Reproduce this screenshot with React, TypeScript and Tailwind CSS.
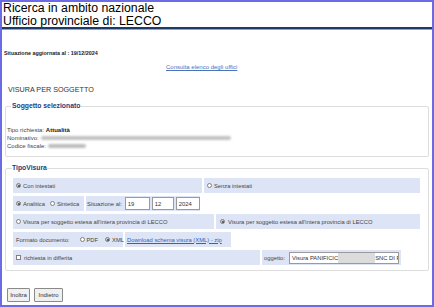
import React from "react";

const Radio = ({ checked }: { checked?: boolean }) => (
  <span
    className={
      "inline-flex w-[5px] h-[5px] rounded-full border border-[#808080] items-center justify-center shrink-0 " +
      (checked ? "bg-[#d0d0d0]" : "bg-white")
    }
  >
    {checked ? <span className="w-[2px] h-[2px] rounded-full bg-[#444]" /> : null}
  </span>
);

const Cell = ({ className, children }: { className?: string; children?: React.ReactNode }) => (
  <div className={"h-full bg-[#dde4f6] flex items-center gap-[2px] whitespace-nowrap shrink-0 " + (className ?? "")}>{children}</div>
);

const Box = ({ w, children }: { w: string; children?: React.ReactNode }) => (
  <div className={"h-[13px] border border-[#9a9a9a] bg-white flex items-center pl-[2px] text-[#333] " + w}>{children}</div>
);

export default function App() {
  return (
    <div className="w-[434px] h-[307px] border-2 border-[#6b6be6] bg-white overflow-hidden font-['Liberation_Sans',Arial,sans-serif] text-[#454545] flex flex-col">
      <div className="h-[25px] pl-[1px] text-[12.3px] leading-[12.5px] text-black">
        <div>Ricerca in ambito nazionale</div>
        <div>Ufficio provinciale di: LECCO</div>
      </div>
      <div className="h-[2px] bg-[#1d3a6b]" />
      <div className="h-[1px] bg-[#8aa3cf]" />

      <div className="mt-[20px] pl-[2px] text-[5.4px] leading-[7px] font-bold text-[#222]">
        Situazione aggiornata al : 19/12/2024
      </div>
      <div className="mt-[7px] pl-[164px] text-[6px] leading-[7px]">
        <span className="text-[#4a72bd] underline">Consulta elenco degli uffici</span>
      </div>
      <div className="mt-[14px] pl-[6px] text-[7.2px] leading-[9px] text-[#333]">VISURA PER SOGGETTO</div>

      <fieldset className="mt-[8px] mx-[3px] border border-[#dddddd] rounded-[2px] px-[1px] pt-[16px] pb-[6px] text-[6px] leading-[8px]">
        <legend className="ml-[4px] px-[1px] text-[6.8px] leading-[8px] font-bold text-[#1f3d7a]">Soggetto selezionato</legend>
        <div>
          Tipo richiesta: <span className="font-bold text-[#222]">Attualità</span>
        </div>
        <div className="flex items-center gap-[2px]">
          <span>Nominativo:</span>
          <span className="inline-block w-[190px] h-[4px] rounded-[2px] bg-[#c2c2c2] blur-[0.8px]" />
        </div>
        <div className="flex items-center gap-[2px]">
          <span>Codice fiscale:</span>
          <span className="inline-block w-[38px] h-[4px] rounded-[2px] bg-[#bdbdbd] blur-[0.8px]" />
        </div>
      </fieldset>

      <fieldset className="mt-[7px] mx-[3px] border border-[#dddddd] rounded-[2px] pl-[7px] pr-[8px] pt-[6px] pb-[5px] text-[5.8px] leading-[8px]">
        <legend className="-ml-[1px] text-[6.8px] leading-[8px] font-bold text-[#1f3d7a]">TipoVisura</legend>

        <div className="flex gap-[2px] h-[15px]">
          <Cell className="w-[189px] pl-[3px]">
            <Radio checked />
            <span>Con intestati</span>
          </Cell>
          <Cell className="flex-1 pl-[3px]">
            <Radio />
            <span>Senza intestati</span>
          </Cell>
        </div>

        <div className="flex gap-[2px] h-[15px] mt-[3px]">
          <Cell className="w-[71px] pl-[3px]">
            <Radio checked />
            <span className="mr-[3px]">Analitica</span>
            <Radio />
            <span>Sintetica</span>
          </Cell>
          <Cell className="w-[114px] pl-[1px] gap-[2px]">
            <span className="mr-[1px]">Situazione al:</span>
            <Box w="w-[25px]">19</Box>
            <Box w="w-[22px]">12</Box>
            <Box w="w-[24px]">2024</Box>
          </Cell>
        </div>

        <div className="flex gap-[2px] h-[15px] mt-[3px]">
          <Cell className="w-[201px] pl-[3px]">
            <Radio />
            <span>Visura per soggetto estesa all'intera provincia di LECCO</span>
          </Cell>
          <Cell className="flex-1 shrink pl-[4px]">
            <Radio checked />
            <span className="ml-[1px]">Visura per soggetto estesa all'intera provincia di LECCO</span>
          </Cell>
        </div>

        <div className="flex gap-[2px] h-[15px] mt-[3px]">
          <Cell className="w-[110px] pl-[3px]">
            <span className="mr-[8px]">Formato documento:</span>
            <Radio />
            <span className="mr-[5px]">PDF</span>
            <Radio checked />
            <span>XML</span>
          </Cell>
          <Cell className="w-[106px] pl-[2px]">
            <span className="text-[#2f62b8] underline">Download schema visura (XML) - zip</span>
          </Cell>
        </div>

        <div className="flex gap-[2px] h-[15px] mt-[3px]">
          <Cell className="w-[247px] pl-[3px] gap-[3px]">
            <span className="w-[5px] h-[5px] border border-[#808080] bg-white shrink-0" />
            <span>richiesta in differita</span>
          </Cell>
          <Cell className="w-[139px] pl-[2px] gap-[4px]">
            <span>oggetto:</span>
            <div className="w-[110px] h-[12px] border border-[#9a9a9a] bg-white flex items-center overflow-hidden whitespace-nowrap text-[#333] pl-[2px]">
              <span>Visura PANIFICIC</span>
              <span className="w-[37px] h-full bg-[#dcdcdc] shrink-0" />
              <span>SNC DI P</span>
            </div>
          </Cell>
        </div>
      </fieldset>

      <div className="mt-[17px] ml-[5px] flex gap-[4px] text-[6px]">
        <button className="w-[23px] h-[14px] border border-[#8a8a8a] bg-[#f0f0f0] rounded-[1px] text-[#333] leading-none">Inoltra</button>
        <button className="w-[29px] h-[14px] border border-[#8a8a8a] bg-[#f0f0f0] rounded-[1px] text-[#333] leading-none">Indietro</button>
      </div>
    </div>
  );
}
